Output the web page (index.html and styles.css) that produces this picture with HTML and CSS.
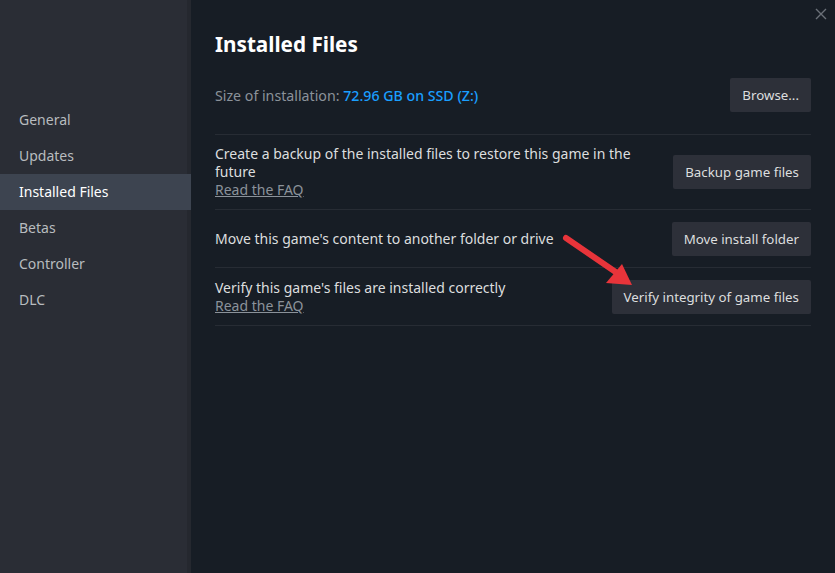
FILE: index.html
```html
<!DOCTYPE html>
<html>
<head>
<meta charset="utf-8">
<link rel="stylesheet" href="styles.css">
</head>
<body>
<div class="app">
  <nav class="sidebar">
    <div class="nav-item">General</div>
    <div class="nav-item">Updates</div>
    <div class="nav-item active">Installed Files</div>
    <div class="nav-item">Betas</div>
    <div class="nav-item">Controller</div>
    <div class="nav-item">DLC</div>
  </nav>
  <main class="main">
    <h1 class="title">Installed Files</h1>
    <div class="size-row">
      <div class="size-text">Size of installation: <span class="size-value">72.96 GB on SSD (Z:)</span></div>
      <button class="btn">Browse...</button>
    </div>
    <div class="rows">
      <div class="row">
        <div class="row-text">
          <div>Create a backup of the installed files to restore this game in the future</div>
          <a class="faq">Read the FAQ</a>
        </div>
        <button class="btn">Backup game files</button>
      </div>
      <div class="row">
        <div class="row-text">
          <div>Move this game's content to another folder or drive</div>
        </div>
        <button class="btn">Move install folder</button>
      </div>
      <div class="row">
        <div class="row-text">
          <div>Verify this game's files are installed correctly</div>
          <a class="faq">Read the FAQ</a>
        </div>
        <button class="btn">Verify integrity of game files</button>
      </div>
    </div>
    <svg class="close" width="12" height="12" viewBox="0 0 12 12"><path d="M1 1L11 11M11 1L1 11" stroke="#6b7078" stroke-width="1.4" fill="none"/></svg>
    <svg class="arrow" width="80" height="60" viewBox="0 0 80 60">
      <line x1="4" y1="4" x2="58" y2="41" stroke="#e8343a" stroke-width="6" stroke-linecap="round"/>
      <polygon points="70,51 44,49 60,30" fill="#e8343a"/>
    </svg>
  </main>
</div>
</body>
</html>
```

FILE: styles.css
```css
* { box-sizing: border-box; }
html, body { margin: 0; padding: 0; }
body {
  width: 835px;
  height: 573px;
  overflow: hidden;
  font-family: "Noto Sans", "Open Sans", sans-serif;
  font-size: 14px;
  color: #dcdedf;
  background: #171d25;
}
.app {
  display: flex;
  height: 573px;
}
.sidebar {
  width: 191px;
  flex: none;
  background: #2a2d35;
  border-right: 4px solid #25282f;
  padding-top: 102px;
}
.nav-item {
  height: 36px;
  line-height: 36px;
  padding-left: 19px;
  color: #b8bcbf;
  font-size: 14px;
  margin-right: -4px;
}
.nav-item.active {
  background: #3d4450;
  color: #ffffff;
}
.main {
  flex: 1;
  position: relative;
  padding: 0 24px;
}
.title {
  margin: 0;
  padding-top: 29px;
  font-size: 20.7px;
  font-weight: 700;
  line-height: 30px;
  color: #ffffff;
}
.size-row {
  display: flex;
  justify-content: space-between;
  align-items: center;
  margin-top: 19px;
  margin-bottom: 22px;
}
.size-text {
  color: #8b929a;
  font-size: 14.2px;
}
.size-value {
  color: #1a9fff;
  font-weight: 500;
}
.btn {
  height: 34px;
  padding: 0 12px;
  border: none;
  border-radius: 2px;
  background: #2d3039;
  color: #dcdedf;
  font-family: inherit;
  font-size: 13.3px;
  flex: none;
}
.rows {
  border-bottom: 1px solid #272c34;
}
.row {
  display: flex;
  justify-content: space-between;
  align-items: center;
  gap: 30px;
  border-top: 1px solid #272c34;
  padding: 10px 0;
  min-height: 58px;
  line-height: 18px;
}
.row-text {
  flex: 1;
}
.faq {
  color: #8b929a;
  text-decoration: underline;
}
.close {
  position: absolute;
  right: 8px;
  top: 8px;
}
.arrow {
  position: absolute;
  left: 371px;
  top: 234px;
}
```
